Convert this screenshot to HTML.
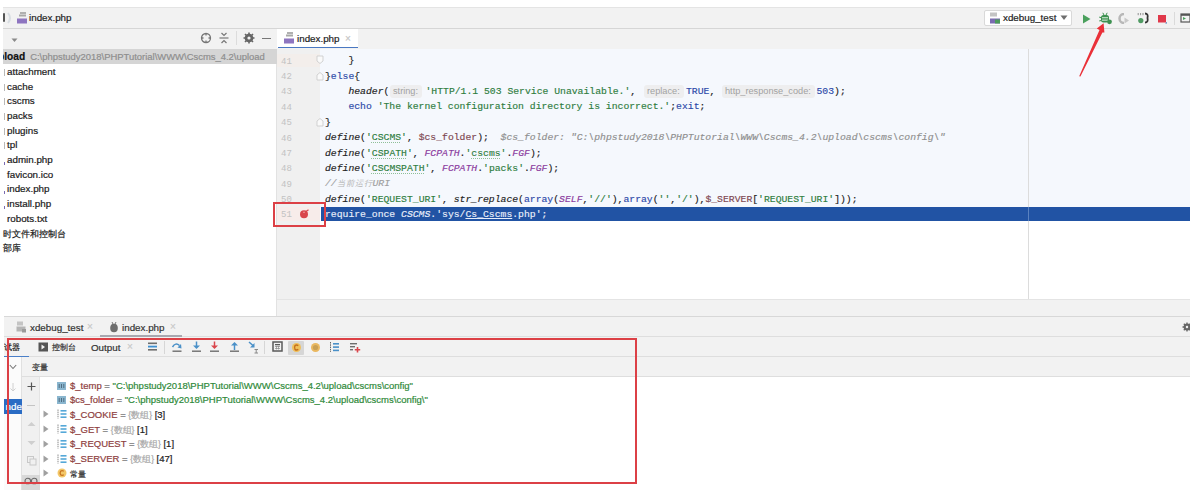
<!DOCTYPE html>
<html><head><meta charset="utf-8">
<style>
*{margin:0;padding:0;box-sizing:border-box}
html,body{width:1200px;height:490px;overflow:hidden;background:#fff}
body{position:relative;font-family:"Liberation Sans",sans-serif;font-size:10px;color:#222}
.a{position:absolute}
.ui{font-family:"Liberation Sans",sans-serif;font-size:9.8px;white-space:nowrap;line-height:14.7px;-webkit-text-stroke:0.2px currentColor}
.code{font-family:"Liberation Mono",monospace;font-size:9.75px;white-space:pre;line-height:15.38px;color:#1a1a1a;-webkit-text-stroke:0.15px currentColor}
.ln{font-family:"Liberation Mono",monospace;font-size:9px;color:#c2c2c2;line-height:15.38px;white-space:pre}
</style></head><body>
<div class="a" style="left:3px;top:7px;width:1187px;height:22px;background:#f2f2f2;border-top:1px solid #e4e4e4;border-bottom:1px solid #d6d6d6"></div>
<div class="a" style="left:3px;top:29px;width:1187px;height:19.5px;background:#f2f2f2"></div>
<div class="a" style="left:3px;top:48.5px;width:274px;height:268px;background:#fff;border-right:1px solid #e2e2e2"></div>
<div class="a" style="left:3px;top:48.6px;width:274px;height:15px;background:#d5d5d5"></div>
<div class="a" style="left:277px;top:48.5px;width:43px;height:250.5px;background:#f0f0f0"></div>
<div class="a" style="left:320px;top:48.5px;width:870px;height:158.5px;background:#f5f8fd"></div>
<div class="a" style="left:320px;top:207px;width:870px;height:92px;background:#fff"></div>
<div class="a" style="left:1028px;top:48.5px;width:1px;height:250.5px;background:#dcdcdc"></div>
<div class="a" style="left:277px;top:299px;width:913px;height:18px;background:#f2f2f2;border-top:1px solid #e4e4e4"></div>
<div class="a" style="left:4px;top:316px;width:1186px;height:21px;background:#f2f2f2;border-top:1px solid #d8d8d8;border-bottom:1px solid #dedede"></div>
<div class="a" style="left:4px;top:337px;width:1186px;height:20px;background:#f2f2f2;border-bottom:1px solid #dedede"></div>
<div class="a" style="left:4px;top:357px;width:18px;height:133px;background:#fbfbfb;border-right:1px solid #e0e0e0"></div>
<div class="a" style="left:22px;top:377px;width:18px;height:113px;background:#f0f0f0;border-right:1px solid #e4e4e4"></div>
<div class="a" style="left:22px;top:357px;width:1168px;height:20px;background:#f2f2f2;border-bottom:1px solid #dedede"></div>
<div class="a" style="left:3px;top:13px;width:2px;height:9px;background:#555;border-radius:1px"></div>
<svg class="a" style="left:6px;top:12px" width="8" height="12"><path d="M2 1 Q6 6 2 11" stroke="#d8dde2" stroke-width="2" fill="none"/></svg>
<svg class="a" style="left:16px;top:11px" width="12" height="13"><rect x="4" y="1" width="6" height="2" fill="#b0b0b0"/><rect x="3" y="3.5" width="7" height="2" fill="#a8a8a8"/><rect x="1" y="7.5" width="10" height="5" fill="#8e75c0"/></svg>
<div class="a ui" style="left:29px;top:11px;color:#222">index.php</div>
<div class="a" style="left:984px;top:10px;width:88px;height:16px;background:#fff;border:1px solid #d9d9d9;border-radius:2px"></div>
<svg class="a" style="left:989px;top:12px" width="12" height="12"><rect x="1" y="0.5" width="7" height="4" fill="#c4c4c4"/><rect x="1" y="6.5" width="10" height="5" fill="#7a6bb0"/><rect x="6" y="7.5" width="5" height="4" fill="#4c9a5a"/></svg>
<div class="a ui" style="left:1003px;top:11px;color:#222">xdebug_test</div>
<svg class="a" style="left:1060px;top:15px" width="8" height="6"><path d="M0.5 0.5 L7.5 0.5 L4 5 Z" fill="#6e6e6e"/></svg>
<svg class="a" style="left:1082px;top:14px" width="9" height="10"><path d="M1 0.5 L8.5 5 L1 9.5 Z" fill="#4aa05c"/></svg>
<svg class="a" style="left:1099px;top:12px" width="14" height="13"><path d="M3.8 0.8 L5 3 M8.2 0.8 L7 3" stroke="#3d9150" stroke-width="1"/><rect x="2" y="3" width="8" height="7.5" rx="2.5" fill="#3d9150"/><rect x="3" y="5.2" width="6" height="1.1" fill="#cfe9d4"/><rect x="3" y="7.6" width="6" height="1.1" fill="#cfe9d4"/><path d="M0.3 5 L2 5.8 M0.3 9 L2 8.5" stroke="#3d9150" stroke-width="1.1"/><circle cx="10.5" cy="9.8" r="2.4" fill="#3d9150"/></svg>
<svg class="a" style="left:1118px;top:13px" width="12" height="11"><path d="M6 1 A4.5 4.5 0 1 0 6 10" stroke="#b8b8b8" stroke-width="2.5" fill="none"/><path d="M6.5 4.5 L11 7.5 L6.5 10.5 Z" fill="#c8c8c8"/></svg>
<svg class="a" style="left:1137px;top:12px" width="12" height="12"><path d="M1.2 1 V3.2 M3.6 1 V3.2 M6 1 V3.2" stroke="#777" stroke-width="0.8"/><circle cx="3.8" cy="8.6" r="2.6" fill="#4f9a62"/><path d="M8 1.5 Q11.5 1.5 10.5 6 Q11.5 10.5 8 10.5" stroke="#333" stroke-width="1.8" fill="none"/></svg>
<svg class="a" style="left:1157px;top:14px" width="11" height="10"><rect x="1" y="1" width="8" height="7.5" fill="#e0384a"/><path d="M9.5 8 L9 10" stroke="#6a8fc0" stroke-width="1"/></svg>
<div class="a" style="left:1174px;top:12px;width:1px;height:13px;background:#dadada"></div>
<svg class="a" style="left:1180px;top:13px" width="10" height="10"><rect x="1" y="1" width="9" height="8" fill="none" stroke="#555" stroke-width="1.2"/><rect x="1" y="1" width="9" height="1.8" fill="#555"/><path d="M3 4 L6 5.5 L3 7 Z" fill="#4aa05c"/></svg>
<svg class="a" style="left:10.5px;top:37.5px" width="7" height="5"><path d="M0.5 0.5 L6.5 0.5 L3.5 4 Z" fill="#8a8a8a"/></svg>
<svg class="a" style="left:200px;top:32px" width="12" height="12"><circle cx="6" cy="6" r="4.5" stroke="#777" stroke-width="1.3" fill="none"/><path d="M6 1 L6 3.5 M6 8.5 L6 11 M1 6 L3.5 6 M8.5 6 L11 6" stroke="#777" stroke-width="1.3"/></svg>
<svg class="a" style="left:219px;top:32px" width="10" height="12"><path d="M0.5 6 L9.5 6" stroke="#777" stroke-width="1.2"/><path d="M2.5 1 L5 3.5 L7.5 1 M2.5 11 L5 8.5 L7.5 11" stroke="#777" stroke-width="1.2" fill="none"/></svg>
<div class="a" style="left:236px;top:31px;width:1px;height:14px;background:#dcdcdc"></div>
<svg class="a" style="left:243px;top:32px" width="12" height="12"><circle cx="6" cy="6" r="3.2" stroke="#666" stroke-width="2.3" fill="none"/><path d="M6 0.5 L6 11.5 M0.5 6 L11.5 6 M2 2 L10 10 M10 2 L2 10" stroke="#666" stroke-width="1.6"/><circle cx="6" cy="6" r="1.6" fill="#f2f2f2"/></svg>
<div class="a" style="left:262px;top:38px;width:9px;height:1.4px;background:#777"></div>
<div class="a" style="left:277px;top:29px;width:81px;height:19px;background:#fff"></div>
<div class="a" style="left:278px;top:46.6px;width:80px;height:1.6px;background:#4a78c2"></div>
<svg class="a" style="left:283px;top:31px" width="12" height="13"><rect x="4" y="1" width="6" height="2" fill="#b0b0b0"/><rect x="3" y="3.5" width="7" height="2" fill="#a8a8a8"/><rect x="1" y="7.5" width="10" height="5" fill="#8e75c0"/></svg>
<div class="a ui" style="left:297px;top:32px;color:#222">index.php</div>
<div class="a ui" style="left:345px;top:31.5px;font-size:10px;color:#c4c4c4">×</div>
<div class="a" style="left:3px;top:50.10px;width:274px;height:15px;overflow:hidden"><div class="a ui" style="left:-5px;top:0px;font-weight:bold;color:#111;font-size:10.2px">pload<span style="font-weight:normal;color:#8e8e8e;font-size:9.45px;margin-left:5px">C:\phpstudy2018\PHPTutorial\WWW\Cscms_4.2\upload</span></div></div>
<div class="a ui" style="left:7px;top:64.80px;color:#1a1a1a">attachment</div>
<div class="a" style="left:4px;top:68.80px;width:1px;height:7px;background:#b8b8b8"></div>
<div class="a ui" style="left:7px;top:79.50px;color:#1a1a1a">cache</div>
<div class="a" style="left:4px;top:83.50px;width:1px;height:7px;background:#b8b8b8"></div>
<div class="a ui" style="left:7px;top:94.20px;color:#1a1a1a">cscms</div>
<div class="a" style="left:4px;top:98.20px;width:1px;height:7px;background:#b8b8b8"></div>
<div class="a ui" style="left:7px;top:108.90px;color:#1a1a1a">packs</div>
<div class="a" style="left:4px;top:112.90px;width:1px;height:7px;background:#b8b8b8"></div>
<div class="a ui" style="left:7px;top:123.60px;color:#1a1a1a">plugins</div>
<div class="a" style="left:4px;top:127.60px;width:1px;height:7px;background:#b8b8b8"></div>
<div class="a ui" style="left:7px;top:138.30px;color:#1a1a1a">tpl</div>
<div class="a" style="left:4px;top:142.30px;width:1px;height:7px;background:#b8b8b8"></div>
<div class="a ui" style="left:7px;top:153.00px;color:#1a1a1a">admin.php</div>
<div class="a" style="left:4px;top:162.00px;width:1px;height:3px;background:#7a6bb0"></div>
<div class="a ui" style="left:7px;top:167.70px;color:#1a1a1a">favicon.ico</div>
<div class="a ui" style="left:7px;top:182.40px;color:#1a1a1a">index.php</div>
<div class="a" style="left:4px;top:191.40px;width:1px;height:3px;background:#7a6bb0"></div>
<div class="a ui" style="left:7px;top:197.10px;color:#1a1a1a">install.php</div>
<div class="a" style="left:4px;top:206.10px;width:1px;height:3px;background:#7a6bb0"></div>
<div class="a ui" style="left:7px;top:211.80px;color:#1a1a1a">robots.txt</div>
<div class="a ui" style="left:3px;top:226.50px;color:#1a1a1a;font-size:8.7px">时文件和控制台</div>
<div class="a ui" style="left:3px;top:241.20px;color:#1a1a1a;font-size:8.7px">部库</div>
<div class="a" style="left:277px;top:53.5px;width:43px;height:13px;background:#f3eeeb"></div>
<svg class="a" style="left:316px;top:55px" width="9" height="10"><path d="M1 1 H7 V6 L4 8.5 L1 6 Z" fill="#fafafa" stroke="#c8c8c8" stroke-width="0.8"/></svg>
<svg class="a" style="left:316px;top:71px" width="9" height="10"><path d="M1 9 H7 V4 L4 1.5 L1 4 Z" fill="#fafafa" stroke="#c8c8c8" stroke-width="0.8"/></svg>
<svg class="a" style="left:316px;top:117px" width="9" height="10"><path d="M1 9 H7 V4 L4 1.5 L1 4 Z" fill="#fafafa" stroke="#c8c8c8" stroke-width="0.8"/></svg>
<div class="a" style="left:277px;top:206.8px;width:43px;height:14.5px;background:#f7ecea"></div>
<svg class="a" style="left:299px;top:209px" width="11" height="10"><circle cx="5" cy="5.3" r="4" fill="#d9464c"/><path d="M5.5 3.5 L9.5 0.8" stroke="#d9464c" stroke-width="1.3"/><path d="M4 3.5 Q5 2.5 6 3.5" stroke="#f3b0b0" stroke-width="0.8" fill="none"/></svg>
<div class="a ln" style="left:281px;top:54.60px">41</div>
<div class="a ln" style="left:281px;top:69.98px">42</div>
<div class="a ln" style="left:281px;top:85.36px">43</div>
<div class="a ln" style="left:281px;top:100.74px">44</div>
<div class="a ln" style="left:281px;top:116.12px">45</div>
<div class="a ln" style="left:281px;top:131.50px">46</div>
<div class="a ln" style="left:281px;top:146.88px">47</div>
<div class="a ln" style="left:281px;top:162.26px">48</div>
<div class="a ln" style="left:281px;top:177.64px">49</div>
<div class="a ln" style="left:281px;top:193.02px">50</div>
<div class="a ln" style="left:281px;top:208.40px">51</div>
<div class="a code" style="left:325px;top:53.30px"><span style="color:#222">    }</span></div>
<div class="a code" style="left:325px;top:68.68px"><span style="color:#222">}</span><span style="color:#2b48a8">else</span><span style="color:#222">{</span></div>
<div class="a code" style="left:325px;top:84.06px"><span style="color:#222">    </span><span style="color:#222;font-style:italic">header</span><span style="color:#222">(</span></div>
<div class="a" style="left:390px;top:85.26px;width:32px;height:13px;background:#eeeeef;border-radius:3px"></div>
<div class="a ui" style="left:393px;top:84.46px;font-size:9.2px;color:#a2a2a2;line-height:15px;-webkit-text-stroke:0">string:</div>
<div class="a code" style="left:425.5px;top:84.06px"><span style="color:#2e7d3e">'HTTP/1.1 503 Service Unavailable.'</span><span style="color:#222">, </span></div>
<div class="a" style="left:644px;top:85.26px;width:39.5px;height:13px;background:#eeeeef;border-radius:3px"></div>
<div class="a ui" style="left:647px;top:84.46px;font-size:9.2px;color:#a2a2a2;line-height:15px;-webkit-text-stroke:0">replace:</div>
<div class="a code" style="left:686px;top:84.06px"><span style="color:#2b48a8">TRUE</span><span style="color:#222">, </span></div>
<div class="a" style="left:722px;top:85.26px;width:92.5px;height:13px;background:#eeeeef;border-radius:3px"></div>
<div class="a ui" style="left:725px;top:84.46px;font-size:9.2px;color:#a2a2a2;line-height:15px;-webkit-text-stroke:0">http_response_code:</div>
<div class="a code" style="left:816.5px;top:84.06px"><span style="color:#2b48a8">503</span><span style="color:#222">);</span></div>
<div class="a code" style="left:325px;top:99.44px"><span style="color:#222">    </span><span style="color:#2b48a8">echo</span><span style="color:#2e7d3e"> 'The kernel configuration directory is incorrect.'</span><span style="color:#222">;</span><span style="color:#2b48a8">exit</span><span style="color:#222">;</span></div>
<div class="a code" style="left:325px;top:114.82px"><span style="color:#222">}</span></div>
<div class="a code" style="left:325px;top:130.20px"><span style="color:#222;font-style:italic">define</span><span style="color:#222">(</span><span style="color:#2e7d3e">'</span><span style="color:#2e7d3e;text-decoration:underline dotted #8fbf98;text-underline-offset:2px">CSCMS</span><span style="color:#2e7d3e">'</span><span style="color:#222">, </span><span style="color:#7d4650">$cs_folder</span><span style="color:#222">);</span><span style="color:#8f8f8f;font-style:italic">  $cs_folder: "C:\phpstudy2018\PHPTutorial\WWW\Cscms_4.2\upload\cscms\config\"</span></div>
<div class="a code" style="left:325px;top:145.58px"><span style="color:#222;font-style:italic">define</span><span style="color:#222">(</span><span style="color:#2e7d3e">'</span><span style="color:#2e7d3e;text-decoration:underline dotted #8fbf98;text-underline-offset:2px">CSPATH</span><span style="color:#2e7d3e">'</span><span style="color:#222">, </span><span style="color:#8b3b9e;font-style:italic">FCPATH</span><span style="color:#222">.</span><span style="color:#2e7d3e">'</span><span style="color:#2e7d3e;text-decoration:underline dotted #8fbf98;text-underline-offset:2px">cscms</span><span style="color:#2e7d3e">'</span><span style="color:#222">.</span><span style="color:#8b3b9e;font-style:italic">FGF</span><span style="color:#222">);</span></div>
<div class="a code" style="left:325px;top:160.96px"><span style="color:#222;font-style:italic">define</span><span style="color:#222">(</span><span style="color:#2e7d3e">'</span><span style="color:#2e7d3e;text-decoration:underline dotted #8fbf98;text-underline-offset:2px">CSCMSPATH</span><span style="color:#2e7d3e">'</span><span style="color:#222">, </span><span style="color:#8b3b9e;font-style:italic">FCPATH</span><span style="color:#222">.</span><span style="color:#2e7d3e">'packs'</span><span style="color:#222">.</span><span style="color:#8b3b9e;font-style:italic">FGF</span><span style="color:#222">);</span></div>
<div class="a code" style="left:325px;top:176.34px"><span style="color:#a0a0a0;font-style:italic">//</span><span style="color:#b4b4b4;font-size:8.3px;letter-spacing:0.95px;font-style:italic;-webkit-text-stroke:0">当前运行</span><span style="color:#a0a0a0;font-style:italic">URI</span></div>
<div class="a code" style="left:325px;top:191.72px"><span style="color:#222;font-style:italic">define</span><span style="color:#222">(</span><span style="color:#2e7d3e">'REQUEST_URI'</span><span style="color:#222">, </span><span style="color:#222;font-style:italic">str_replace</span><span style="color:#222">(</span><span style="color:#2b48a8">array</span><span style="color:#222">(</span><span style="color:#8b3b9e;font-style:italic">SELF</span><span style="color:#222">,</span><span style="color:#2e7d3e">'//'</span><span style="color:#222">),</span><span style="color:#2b48a8">array</span><span style="color:#222">(</span><span style="color:#2e7d3e">''</span><span style="color:#222">,</span><span style="color:#2e7d3e">'/'</span><span style="color:#222">),</span><span style="color:#7d4650">$_SERVER</span><span style="color:#222">[</span><span style="color:#2e7d3e">'REQUEST_URI'</span><span style="color:#222">]));</span></div>
<div class="a" style="left:320.5px;top:206.8px;width:869.5px;height:14.5px;background:#2153a4"></div>
<div class="a" style="left:1028px;top:206.8px;width:1px;height:14.5px;background:#5a82c0"></div>
<div class="a code" style="left:325px;top:207.10px"><span style="color:#e8eefa">require_once </span><span style="color:#e8eefa;font-style:italic">CSCMS</span><span style="color:#e8eefa">.'sys/</span><span style="color:#e8eefa;text-decoration:underline">Cs_Cscms</span><span style="color:#e8eefa">.php';</span></div>
<svg class="a" style="left:16px;top:321px" width="11" height="12"><rect x="1" y="0.5" width="6" height="4" fill="#c4c4c4"/><rect x="0.5" y="5.5" width="9" height="5" fill="#b5b5b5"/><rect x="6" y="8" width="4" height="3.5" fill="#9a9a9a"/></svg>
<div class="a ui" style="left:30px;top:320.5px;color:#333">xdebug_test</div>
<div class="a ui" style="left:87px;top:320px;font-size:10px;color:#c8c8c8">×</div>
<svg class="a" style="left:109px;top:321px" width="10" height="12"><path d="M3 1 L4 3 M7 1 L6 3" stroke="#777" stroke-width="1"/><ellipse cx="5" cy="7" rx="3.8" ry="4.3" fill="#6e6e6e"/></svg>
<div class="a ui" style="left:122px;top:320.5px;color:#333">index.php</div>
<div class="a ui" style="left:170px;top:320px;font-size:10px;color:#c8c8c8">×</div>
<div class="a" style="left:100px;top:335px;width:82px;height:2px;background:#a8a8b0"></div>
<div class="a" style="left:1176px;top:318px;width:14px;height:18px;overflow:hidden"><svg class="a" style="left:6px;top:4px" width="10" height="10"><circle cx="5" cy="5" r="2.6" stroke="#666" stroke-width="1.8" fill="none"/><path d="M5 0.5 L5 9.5 M0.5 5 L9.5 5 M1.8 1.8 L8.2 8.2 M8.2 1.8 L1.8 8.2" stroke="#666" stroke-width="1.3"/><circle cx="5" cy="5" r="1.2" fill="#f2f2f2"/></svg></div>
<div class="a" style="left:4px;top:340px;width:18px;height:16px;overflow:hidden"><div class="a ui" style="left:-8px;top:1px;font-size:8.2px;color:#222">调试器</div></div>
<div class="a" style="left:4px;top:355.5px;width:25px;height:1.6px;background:#4a7fc8"></div>
<svg class="a" style="left:38px;top:342px" width="11" height="10"><rect x="0.5" y="0.5" width="9.5" height="9" fill="#555"/><path d="M3.5 2.5 L7 5 L3.5 7.5 Z" fill="#f2f2f2"/></svg>
<div class="a ui" style="left:52px;top:341px;font-size:8px;color:#333">控制台</div>
<div class="a ui" style="left:91px;top:340.5px;color:#333">Output</div>
<div class="a ui" style="left:127px;top:340px;font-size:10px;color:#c8c8c8">×</div>
<svg class="a" style="left:147px;top:341px" width="11" height="11"><rect x="1" y="1.5" width="9" height="1.6" fill="#6e6e6e"/><rect x="1" y="4.7" width="9" height="1.8" fill="#3d8fd0"/><rect x="1" y="8" width="9" height="1.6" fill="#6e6e6e"/></svg>
<div class="a" style="left:164px;top:341px;width:1px;height:13px;background:#d6d6d6"></div>
<svg class="a" style="left:171px;top:341px" width="12" height="12"><path d="M1.5 6 Q4.5 1 8.5 4.5" stroke="#4a90c8" stroke-width="1.5" fill="none"/><path d="M10.5 7.5 L6.5 6.5 L10 3 Z" fill="#4a90c8"/><rect x="1.5" y="9.5" width="9" height="1.4" fill="#6e6e6e"/></svg>
<svg class="a" style="left:191px;top:341px" width="11" height="12"><path d="M5.5 0.5 L5.5 5" stroke="#4a90c8" stroke-width="1.5"/><path d="M2 4.5 L9 4.5 L5.5 8 Z" fill="#4a90c8"/><rect x="1" y="9.5" width="9" height="1.4" fill="#6e6e6e"/></svg>
<svg class="a" style="left:209px;top:341px" width="11" height="12"><path d="M5.5 0.5 L5.5 5" stroke="#d9464c" stroke-width="1.5"/><path d="M2 4.5 L9 4.5 L5.5 8 Z" fill="#d9464c"/><rect x="1" y="9.5" width="9" height="1.4" fill="#6e6e6e"/></svg>
<svg class="a" style="left:229px;top:341px" width="11" height="12"><path d="M5.5 4 L5.5 9" stroke="#4a90c8" stroke-width="1.5"/><path d="M2 4.5 L9 4.5 L5.5 1 Z" fill="#4a90c8"/><rect x="1" y="9.5" width="9" height="1.4" fill="#6e6e6e"/></svg>
<svg class="a" style="left:248px;top:341px" width="12" height="13"><path d="M1 1 L5.5 5" stroke="#4a90c8" stroke-width="1.5"/><path d="M6.5 2 L6.5 6.5 L2 6.5 Z" fill="#4a90c8"/><path d="M6.5 8.5 L10 8.5 M8.2 8.5 L8.2 12 M6.5 12 L10 12" stroke="#888" stroke-width="1"/></svg>
<div class="a" style="left:264px;top:341px;width:1px;height:13px;background:#d6d6d6"></div>
<svg class="a" style="left:272px;top:341px" width="11" height="11"><rect x="1" y="1" width="9" height="9" fill="none" stroke="#5a5a5a" stroke-width="1.5"/><rect x="3" y="3" width="5" height="1.3" fill="#5a5a5a"/><path d="M3 5.5 H8 M3 7.5 H8 M4.5 5 V8.5 M6.5 5 V8.5" stroke="#8a8a8a" stroke-width="0.7"/></svg>
<div class="a" style="left:288px;top:341px;width:16px;height:14px;background:#d6d6d6;border-radius:1px"></div>
<svg class="a" style="left:291px;top:342px" width="11" height="11"><circle cx="5.5" cy="5.5" r="4.5" fill="#f0c05a"/><path d="M7.3 3.6 Q5.5 2.3 4 3.6 Q3 5.5 4 7.4 Q5.5 8.7 7.3 7.4" stroke="#c4701e" stroke-width="1.4" fill="none"/></svg>
<svg class="a" style="left:310px;top:342px" width="11" height="11"><circle cx="5.5" cy="5.5" r="4.5" fill="#eab860"/><circle cx="5.5" cy="5.5" r="2.6" fill="#c9a055"/></svg>
<svg class="a" style="left:329px;top:341px" width="11" height="12"><path d="M1.5 1 V11" stroke="#666" stroke-width="1" stroke-dasharray="1.5 0.8"/><rect x="4" y="2" width="6" height="1.6" fill="#4a90c8"/><rect x="4" y="5.3" width="6" height="1.6" fill="#4a90c8"/><rect x="4" y="8.6" width="6" height="1.6" fill="#4a90c8"/></svg>
<svg class="a" style="left:349px;top:341px" width="12" height="12"><rect x="1" y="2" width="7" height="1.4" fill="#6e6e6e"/><rect x="1" y="5" width="5" height="1.4" fill="#6e6e6e"/><rect x="1" y="8" width="3" height="1.4" fill="#6e6e6e"/><path d="M8.5 6 V11.5 M5.8 8.7 H11.2" stroke="#d9464c" stroke-width="1.6"/></svg>
<svg class="a" style="left:9px;top:364px" width="8" height="6"><path d="M0.8 1 L4 4.5 L7.2 1" stroke="#777" stroke-width="1.1" fill="none"/></svg>
<div class="a ui" style="left:32px;top:361px;font-size:8px;color:#333">变量</div>
<svg class="a" style="left:9px;top:382px" width="8" height="11"><path d="M4 1 V9 M1.5 6.5 L4 9 L6.5 6.5" stroke="#d0d0d0" stroke-width="1" fill="none"/></svg>
<div class="a" style="left:4px;top:399px;width:18px;height:15px;background:#2a6cc4;overflow:hidden"><div class="a ui" style="left:1.5px;top:0.5px;color:#fff">ndex.php</div></div>
<svg class="a" style="left:27px;top:382px" width="9" height="9"><path d="M4.5 0.5 V8.5 M0.5 4.5 H8.5" stroke="#555" stroke-width="1.2"/></svg>
<div class="a" style="left:27px;top:404.5px;width:8px;height:1px;background:#c4c4c4"></div>
<svg class="a" style="left:27px;top:421px" width="9" height="6"><path d="M0.5 5 L4.5 1 L8.5 5 Z" fill="#cfcfcf"/></svg>
<svg class="a" style="left:27px;top:440px" width="9" height="6"><path d="M0.5 1 L4.5 5 L8.5 1 Z" fill="#cfcfcf"/></svg>
<svg class="a" style="left:27px;top:456px" width="10" height="10"><rect x="0.5" y="0.5" width="6" height="6" fill="none" stroke="#c8c8c8" stroke-width="1"/><rect x="3" y="3" width="6" height="6" fill="#f0f0f0" stroke="#c8c8c8" stroke-width="1"/></svg>
<div class="a" style="left:22px;top:475px;width:18px;height:15px;background:#d8d8d8"></div>
<svg class="a" style="left:24px;top:477px" width="14" height="8"><circle cx="3.8" cy="4" r="2.8" stroke="#6a6a6a" stroke-width="1.1" fill="none"/><circle cx="10.2" cy="4" r="2.8" stroke="#6a6a6a" stroke-width="1.1" fill="none"/></svg>
<svg class="a" style="left:57px;top:381.50px" width="9" height="8"><rect x="0" y="0" width="9" height="8" fill="#8ab6cf"/><path d="M2.2 2 V6 M4.5 2 V6 M6.8 2 V6" stroke="#4a6478" stroke-width="0.9"/></svg>
<div class="a ui" style="left:70px;top:378.65px;font-size:9.5px"><span style="color:#8e3e3e">$_temp</span><span style="color:#777"> = </span><span style="color:#2f8a3a">"C:\phpstudy2018\PHPTutorial\WWW\Cscms_4.2\upload\cscms\config"</span></div>
<svg class="a" style="left:57px;top:396.20px" width="9" height="8"><rect x="0" y="0" width="9" height="8" fill="#8ab6cf"/><path d="M2.2 2 V6 M4.5 2 V6 M6.8 2 V6" stroke="#4a6478" stroke-width="0.9"/></svg>
<div class="a ui" style="left:70px;top:393.35px;font-size:9.5px"><span style="color:#8e3e3e">$cs_folder</span><span style="color:#777"> = </span><span style="color:#2f8a3a">"C:\phpstudy2018\PHPTutorial\WWW\Cscms_4.2\upload\cscms\config\"</span></div>
<svg class="a" style="left:43px;top:410.40px" width="6" height="8"><path d="M0.5 0.5 L5.5 4 L0.5 7.5 Z" fill="#a0a0a0"/></svg>
<svg class="a" style="left:57px;top:409.40px" width="10" height="10"><path d="M1 0.5 V9.5" stroke="#8a8a8a" stroke-width="1" stroke-dasharray="1.4 0.7"/><rect x="3.5" y="1" width="6" height="1.6" fill="#55a8d8"/><rect x="3.5" y="4.2" width="6" height="1.6" fill="#55a8d8"/><rect x="3.5" y="7.4" width="6" height="1.6" fill="#55a8d8"/></svg>
<div class="a ui" style="left:70px;top:408.05px;font-size:9.5px"><span style="color:#8e3e3e">$_COOKIE</span><span style="color:#777"> = </span><span style="color:#a8a8a8;font-size:8.5px">{数组}</span><span style="color:#222"> [3]</span></div>
<svg class="a" style="left:43px;top:425.10px" width="6" height="8"><path d="M0.5 0.5 L5.5 4 L0.5 7.5 Z" fill="#a0a0a0"/></svg>
<svg class="a" style="left:57px;top:424.10px" width="10" height="10"><path d="M1 0.5 V9.5" stroke="#8a8a8a" stroke-width="1" stroke-dasharray="1.4 0.7"/><rect x="3.5" y="1" width="6" height="1.6" fill="#55a8d8"/><rect x="3.5" y="4.2" width="6" height="1.6" fill="#55a8d8"/><rect x="3.5" y="7.4" width="6" height="1.6" fill="#55a8d8"/></svg>
<div class="a ui" style="left:70px;top:422.75px;font-size:9.5px"><span style="color:#8e3e3e">$_GET</span><span style="color:#777"> = </span><span style="color:#a8a8a8;font-size:8.5px">{数组}</span><span style="color:#222"> [1]</span></div>
<svg class="a" style="left:43px;top:439.80px" width="6" height="8"><path d="M0.5 0.5 L5.5 4 L0.5 7.5 Z" fill="#a0a0a0"/></svg>
<svg class="a" style="left:57px;top:438.80px" width="10" height="10"><path d="M1 0.5 V9.5" stroke="#8a8a8a" stroke-width="1" stroke-dasharray="1.4 0.7"/><rect x="3.5" y="1" width="6" height="1.6" fill="#55a8d8"/><rect x="3.5" y="4.2" width="6" height="1.6" fill="#55a8d8"/><rect x="3.5" y="7.4" width="6" height="1.6" fill="#55a8d8"/></svg>
<div class="a ui" style="left:70px;top:437.45px;font-size:9.5px"><span style="color:#8e3e3e">$_REQUEST</span><span style="color:#777"> = </span><span style="color:#a8a8a8;font-size:8.5px">{数组}</span><span style="color:#222"> [1]</span></div>
<svg class="a" style="left:43px;top:454.50px" width="6" height="8"><path d="M0.5 0.5 L5.5 4 L0.5 7.5 Z" fill="#a0a0a0"/></svg>
<svg class="a" style="left:57px;top:453.50px" width="10" height="10"><path d="M1 0.5 V9.5" stroke="#8a8a8a" stroke-width="1" stroke-dasharray="1.4 0.7"/><rect x="3.5" y="1" width="6" height="1.6" fill="#55a8d8"/><rect x="3.5" y="4.2" width="6" height="1.6" fill="#55a8d8"/><rect x="3.5" y="7.4" width="6" height="1.6" fill="#55a8d8"/></svg>
<div class="a ui" style="left:70px;top:452.15px;font-size:9.5px"><span style="color:#8e3e3e">$_SERVER</span><span style="color:#777"> = </span><span style="color:#a8a8a8;font-size:8.5px">{数组}</span><span style="color:#222"> [47]</span></div>
<svg class="a" style="left:43px;top:469.20px" width="6" height="8"><path d="M0.5 0.5 L5.5 4 L0.5 7.5 Z" fill="#a0a0a0"/></svg>
<svg class="a" style="left:57px;top:468.20px" width="10" height="10"><circle cx="5" cy="5" r="4.5" fill="#f3c768"/><path d="M6.8 3.2 Q5 2 3.6 3.2 Q2.6 5 3.6 6.8 Q5 8 6.8 6.8" stroke="#c8741e" stroke-width="1.3" fill="none"/></svg>
<div class="a ui" style="left:70px;top:466.85px;font-size:9.5px"><span style="color:#333;font-size:8.3px">常量</span></div>
<svg class="a" style="left:1070px;top:15px" width="45" height="70"><path d="M33.6 8.2 L26.8 13.6 L29.5 15.0 L9.2 61.3 L10.4 61.5 L32.4 17.6 L34.4 17.6 Z" fill="#ea3038"/></svg>
<div class="a" style="left:7px;top:338px;width:630px;height:145.5px;border:2px solid #dc4046"></div>
<div class="a" style="left:273px;top:202px;width:53px;height:24.5px;border:2px solid #dc4046"></div>
</body></html>
